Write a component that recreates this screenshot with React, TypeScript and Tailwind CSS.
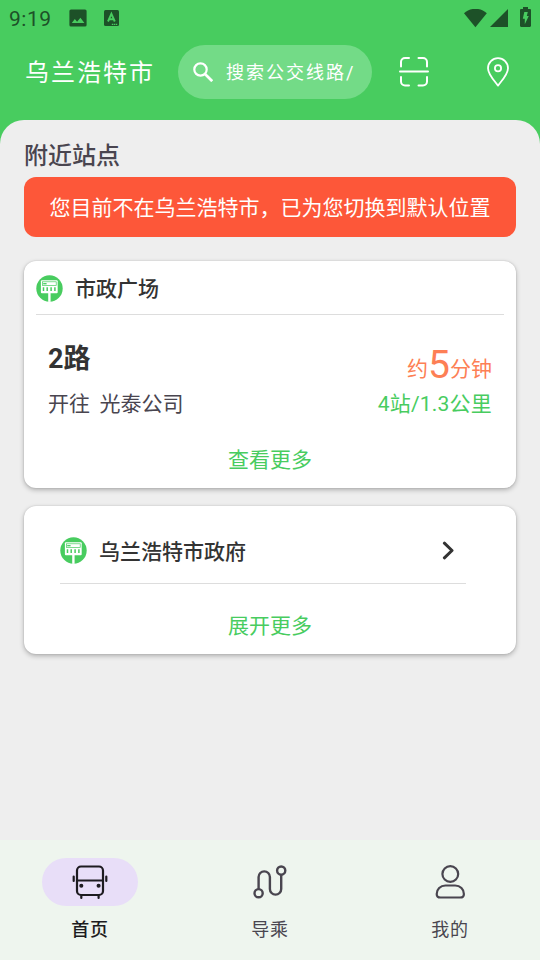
import type { ReactNode } from "react"
import clsx from "clsx"

function StatusBar() {
  return (
    <div className="flex h-9 items-center justify-between pl-[9px] pr-[9px] text-[#1d5128]">
      <div className="flex items-center">
        <span className="w-[60px] pt-0.5 text-[21px] leading-none tracking-[0.5px]">9:19</span>
        <svg className="h-[18px] w-[18px]" viewBox="0 0 18 18">
          <path fill="currentColor" fillRule="evenodd" d="M2 0.500h14a1.600 1.600 0 0 1 1.600 1.600v13.800a1.600 1.600 0 0 1-1.600 1.600H2a1.600 1.600 0 0 1-1.600-1.600V2.100A1.600 1.600 0 0 1 2 .5zM2.800 14h12.600L11.400 8.700l-3.300 4.100L5.800 10z" />
        </svg>
        <svg className="ml-[17px] h-4 w-[15px]" viewBox="0 0 15 16">
          <rect width="15" height="16" rx="1.500" fill="currentColor" />
          <path d="M4 11.500 7.400 3.800l3.400 7.700M5.200 9.300h4.400" fill="none" stroke="#48cc5f" strokeWidth="1.900" />
          <path d="M7.800 14.300h1.400m.6 0h1.400m.6 0h1.400" stroke="#48cc5f" strokeWidth="1.200" />
        </svg>
      </div>
      <div className="flex items-center">
        <svg className="h-[19px] w-[23px]" viewBox="0 0 23 19">
          <path fill="currentColor" d="M11.400 18.300 0 4.300C3 1.300 7-.2 11.400-.2s8.400 1.500 11.400 4.500z" />
        </svg>
        <svg className="ml-[3px] h-[18px] w-[18px]" viewBox="0 0 18 18">
          <path fill="currentColor" d="M0 18 18 0v18z" />
        </svg>
        <svg className="mb-0.5 ml-3 h-5 w-[11px]" viewBox="0 0 11 20">
          <path fill="currentColor" d="M3 0h5v2h1.800c.7 0 1.200.5 1.200 1.200v15.600c0 .7-.5 1.200-1.200 1.200H1.200C.5 20 0 19.500 0 18.800V3.200C0 2.500.5 2 1.200 2H3z" />
          <path fill="#48cc5f" d="M4.300 5h3.500l-1 4h2L4.800 17.300v-5.500H2.800z" />
        </svg>
      </div>
    </div>
  )
}

function Header() {
  return (
    <header className="flex h-[72px] items-center pl-[25px] text-white">
      <h1 className="w-[153px] whitespace-nowrap pt-0.5 text-[24px] leading-9 tracking-[2px]">乌兰浩特市</h1>
      <div className="flex h-[54px] w-[194px] items-center overflow-hidden rounded-full bg-[#73db87] pl-[15px]">
        <svg className="mb-px h-5 w-5" viewBox="0 0 20 20" fill="none" stroke="currentColor">
          <circle cx="7.500" cy="7.500" r="6.200" strokeWidth="2.200" />
          <path d="m12 12 7.200 7.200" strokeWidth="2.700" />
        </svg>
        <span className="ml-[13px] whitespace-nowrap pt-px text-[18px] tracking-[2px]">搜索公交线路/</span>
      </div>
      <svg className="ml-[27px] h-[30px] w-[30px]" viewBox="0 0 30 30" fill="none" stroke="currentColor" strokeWidth="2" strokeLinecap="round">
        <path d="M2 9.500V5a4 4 0 0 1 4-4h4M19.500 1H24a4 4 0 0 1 4 4v4.500M28 20v4.500a4 4 0 0 1-4 4h-4.500M10 28.500H6a4 4 0 0 1-4-4V20M1 14.500h28" />
      </svg>
      <svg className="ml-[58px] h-[30px] w-[22px]" viewBox="0 0 22 30" fill="none" stroke="currentColor" strokeWidth="1.800">
        <path d="M11 28.600C8 24.500 1 17.500 1 11.200a10 10 0 0 1 20 0c0 6.300-7 13.300-10 17.400z" strokeLinejoin="round" />
        <circle cx="11" cy="11.300" r="3.100" />
      </svg>
    </header>
  )
}

function StopIcon() {
  return (
    <svg className="h-[27px] w-[27px]" viewBox="0 0 27 27">
      <circle cx="13.500" cy="13.500" r="13.200" fill="#48cc5f" />
      <rect x="4.900" y="5.200" width="16.800" height="13" rx="1" fill="#fff" />
      <path d="M12.200 18h2.400v8.900h-2.400z" fill="#fff" />
      <rect x="6.400" y="6.800" width="13.800" height="3.600" fill="none" stroke="#48cc5f" strokeWidth="0.700" />
      <path d="M7.200 8.700h3.400" stroke="#48cc5f" strokeWidth="1.300" />
      <path d="M7.500 12.300v3.800M11.200 12.300v3.800M15.100 12.300v3.800M18.900 12.300v3.800" stroke="#48cc5f" strokeWidth="1.500" />
    </svg>
  )
}

function Card({ className, children }: { className?: string, children: ReactNode }) {
  return (
    <section className={clsx("rounded-xl bg-white shadow-[0_2px_5px_rgba(0,0,0,0.26),0_0_2px_rgba(0,0,0,0.14)]", className)}>
      {children}
    </section>
  )
}

function MoreLink({ text }: { text: string }) {
  return <div className="text-center text-[21px] leading-[30px] text-[#48cc5f]">{text}</div>
}

const tabs = [
  {
    text: "首页", active: true, icon: (
      <svg className="h-9 w-9" viewBox="0 0 36 36" fill="none" stroke="currentColor" strokeWidth="2.200" strokeLinecap="round">
        <rect x="5" y="2.500" width="26" height="28.500" rx="4" />
        <path d="M5 16.500h26M9.300 32v2M26.600 32v2M1.700 12.600v4.400M34.300 12.600v4.400" />
        <circle cx="9.300" cy="21.700" r="1.300" fill="currentColor" strokeWidth="1.500" />
        <circle cx="26.600" cy="21.700" r="1.300" fill="currentColor" strokeWidth="1.500" />
      </svg>
    )
  },
  {
    text: "导乘", active: false, icon: (
      <svg className="h-9 w-9" viewBox="0 0 36 36" fill="none" stroke="currentColor" strokeWidth="2.400">
        <circle cx="6.600" cy="29.200" r="4.100" />
        <circle cx="29.200" cy="6.600" r="4.100" />
        <path d="M6.600 25V13a5.600 5.600 0 0 1 11.300 0v12a5.600 5.600 0 0 0 11.300 0V10.700" />
      </svg>
    )
  },
  {
    text: "我的", active: false, icon: (
      <svg className="h-9 w-9" viewBox="0 0 36 36" fill="none" stroke="currentColor" strokeWidth="2.200">
        <circle cx="18.300" cy="10" r="7.900" />
        <path d="M13.500 21.500h9.600c5.200 0 8.800 4 8.800 8.400 0 2.200-1.600 3.600-3.800 3.600H8.500c-2.200 0-3.800-1.400-3.800-3.600 0-4.400 3.600-8.400 8.800-8.400z" />
      </svg>
    )
  },
]

function BottomNav() {
  return (
    <nav className="grid h-[120px] grid-cols-3 bg-[#eef5ee] pt-[18px]">
      {tabs.map((tab) => (
        <div key={tab.text} className={clsx("flex flex-col items-center", tab.active ? "text-[#1d1b20]" : "text-[#49454f]")}>
          <div className={clsx("flex h-12 w-24 items-center justify-center rounded-full", tab.active && "bg-[#e8def8]")}>
            {tab.icon}
          </div>
          <span className={clsx("mt-[9px] text-[18px] leading-[30px] tracking-[0.750px]", tab.active && "font-medium")}>{tab.text}</span>
        </div>
      ))}
    </nav>
  )
}

export default function App() {
  return (
    <div className="flex h-[960px] w-[540px] flex-col overflow-hidden bg-[#48cc5f] font-[Roboto,'Noto_Sans_CJK_SC',sans-serif]">
      <StatusBar />
      <Header />
      <main className="mt-3 flex-1 rounded-t-3xl bg-[#eeeeee] px-6 pt-[18px]">
        <h2 className="text-[24px] font-medium leading-9 text-[#49454f]">附近站点</h2>
        <div className="mt-[3px] flex h-[60px] items-center justify-center rounded-xl bg-[#fd5739] pt-1 text-[21px] text-white">
          您目前不在乌兰浩特市，已为您切换到默认位置
        </div>

        <Card className="mt-6 h-[227px] px-3">
          <div className="flex h-[54px] items-center border-b border-[#dddddd] pt-0.5">
            <StopIcon />
            <span className="ml-3 pt-0.5 text-[21px] font-medium text-[#333333]">市政广场</span>
          </div>
          <div className="px-3 pt-[26px]">
            <div className="flex h-[42px] items-start justify-between">
              <span className="text-[27px] font-bold leading-9 text-[#333333]">2路</span>
              <span className="flex items-baseline pt-px text-[21px] leading-[42px] text-[#fd7f55]">
                约<span className="translate-y-0.5 text-[39px]">5</span>分钟
              </span>
            </div>
            <div className="mt-1 flex justify-between text-[21px] leading-[34px]">
              <span className="whitespace-pre text-[#49454f] [word-spacing:-0.5px]">开往  光泰公司</span>
              <span className="tracking-[0.200px] text-[#48cc5f]">4站/1.3公里</span>
            </div>
          </div>
          <div className="mt-6">
            <MoreLink text="查看更多" />
          </div>
        </Card>

        <Card className="mt-[18px] h-[148px]">
          <div className="ml-9 mr-[50px] flex h-[78px] items-center border-b border-[#dddddd] pt-3">
            <StopIcon />
            <span className="ml-3 pt-1 text-[21px] font-medium text-[#333333]">乌兰浩特市政府</span>
            <svg className="ml-auto mr-3 h-[19px] w-3" viewBox="0 0 12 19" fill="none" stroke="#333333" strokeWidth="3" strokeLinecap="round" strokeLinejoin="round">
              <path d="m2.400 2.200 7.600 7.300-7.600 7.300" />
            </svg>
          </div>
          <div className="pt-[27px]">
            <MoreLink text="展开更多" />
          </div>
        </Card>
      </main>
      <BottomNav />
    </div>
  )
}
